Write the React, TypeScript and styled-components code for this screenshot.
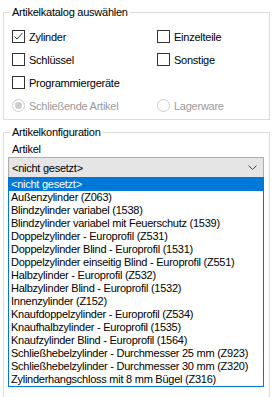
import React from "react";
import styled, { createGlobalStyle } from "styled-components";

const Global = createGlobalStyle`
  html, body { margin: 0; padding: 0; background: #fff; }
  body { font-family: "Liberation Sans", Arial, sans-serif; font-size: 11px; letter-spacing: -0.25px; color: #000; overflow: hidden; }
`;

const Page = styled.div`
  width: 273px;
  padding: 4px 3px 0 3px;
  box-sizing: border-box;
`;

const Group = styled.fieldset<{ $top?: number; $height: number }>`
  margin: ${(p) => p.$top ?? 0}px 0 0 0;
  padding: 0 0 0 8px;
  border: 1px solid #dcdcdc;
  width: 267px;
  height: ${(p) => p.$height}px;
  box-sizing: border-box;
  min-width: 0;
`;

const Title = styled.legend`
  padding: 0 2px;
  margin-left: -2px;
  line-height: 16px;
  height: 16px;
`;

const OptionGrid = styled.div`
  display: grid;
  grid-template-columns: 145px 1fr;
  grid-auto-rows: 23px;
  margin-top: 5px;
`;

const Option = styled.label<{ $disabled?: boolean }>`
  display: flex;
  align-items: center;
  gap: 4px;
  color: ${(p) => (p.$disabled ? "#9a9a9a" : "#000")};
  white-space: nowrap;
`;

const Box = styled.span`
  width: 13px;
  height: 13px;
  box-sizing: border-box;
  border: 1px solid #333;
  background: #fff;
  display: inline-flex;
  align-items: center;
  justify-content: center;
  flex: none;
`;

const Radio = styled.span<{ $checked?: boolean }>`
  width: 13px;
  height: 13px;
  box-sizing: border-box;
  border: 1px solid #cccccc;
  border-radius: 50%;
  background: #fff;
  display: inline-flex;
  align-items: center;
  justify-content: center;
  flex: none;
  &::after {
    content: "";
    width: 7px;
    height: 7px;
    border-radius: 50%;
    background: ${(p) => (p.$checked ? "#cccccc" : "transparent")};
  }
`;

const FieldLabel = styled.div`
  margin-top: 1px;
  line-height: 16px;
  height: 16px;
`;

const ComboWrap = styled.div`
  position: relative;
  margin: 0 0 0 -4px;
  width: 256px;
`;

const Combo = styled.div`
  height: 21px;
  box-sizing: border-box;
  border: 1px solid #adadad;
  background: #e5e5e5;
  display: flex;
  align-items: center;
  justify-content: space-between;
  padding: 0 6px 0 3px;
`;

const List = styled.ul`
  position: absolute;
  left: 0;
  top: 20px;
  width: 256px;
  margin: 0;
  padding: 0;
  list-style: none;
  border: 1px solid #0078d7;
  background: #fff;
  box-sizing: border-box;
`;

const Item = styled.li<{ $selected?: boolean }>`
  height: 13px;
  line-height: 13px;
  padding-left: 2px;
  white-space: nowrap;
  background: ${(p) => (p.$selected ? "#0078d7" : "transparent")};
  color: ${(p) => (p.$selected ? "#fff" : "#000")};
`;

const items = [
  "<nicht gesetzt>",
  "Außenzylinder (Z063)",
  "Blindzylinder variabel (1538)",
  "Blindzylinder variabel mit Feuerschutz (1539)",
  "Doppelzylinder - Europrofil (Z531)",
  "Doppelzylinder Blind - Europrofil (1531)",
  "Doppelzylinder einseitig Blind - Europrofil (Z551)",
  "Halbzylinder - Europrofil (Z532)",
  "Halbzylinder Blind - Europrofil (1532)",
  "Innenzylinder (Z152)",
  "Knaufdoppelzylinder - Europrofil (Z534)",
  "Knaufhalbzylinder - Europrofil (1535)",
  "Knaufzylinder Blind - Europrofil (1564)",
  "Schließhebelzylinder - Durchmesser 25 mm (Z923)",
  "Schließhebelzylinder - Durchmesser 30 mm (Z320)",
  "Zylinderhangschloss mit 8 mm Bügel (Z316)",
];

const Check = () => (
  <svg width="11" height="11" viewBox="0 0 11 11">
    <path d="M1.5 5.5 L4 8 L9.5 2" fill="none" stroke="#333" strokeWidth="1" />
  </svg>
);

const Chevron = () => (
  <svg width="9" height="5" viewBox="0 0 9 5">
    <path d="M0.5 0.5 L4.5 4.5 L8.5 0.5" fill="none" stroke="#444" strokeWidth="1" />
  </svg>
);

export default function App() {
  return (
    <>
      <Global />
      <Page>
        <Group $height={116}>
          <Title>Artikelkatalog auswählen</Title>
          <OptionGrid>
            <Option><Box><Check /></Box>Zylinder</Option>
            <Option><Box />Einzelteile</Option>
            <Option><Box />Schlüssel</Option>
            <Option><Box />Sonstige</Option>
            <Option><Box />Programmiergeräte</Option>
            <span />
            <Option $disabled><Radio $checked />Schließende Artikel</Option>
            <Option $disabled><Radio />Lagerware</Option>
          </OptionGrid>
        </Group>
        <Group $top={4} $height={300}>
          <Title>Artikelkonfiguration</Title>
          <FieldLabel>Artikel</FieldLabel>
          <ComboWrap>
            <Combo>
              <span>&lt;nicht gesetzt&gt;</span>
              <Chevron />
            </Combo>
            <List>
              {items.map((t, i) => (
                <Item key={t} $selected={i === 0}>{t}</Item>
              ))}
            </List>
          </ComboWrap>
        </Group>
      </Page>
    </>
  );
}
